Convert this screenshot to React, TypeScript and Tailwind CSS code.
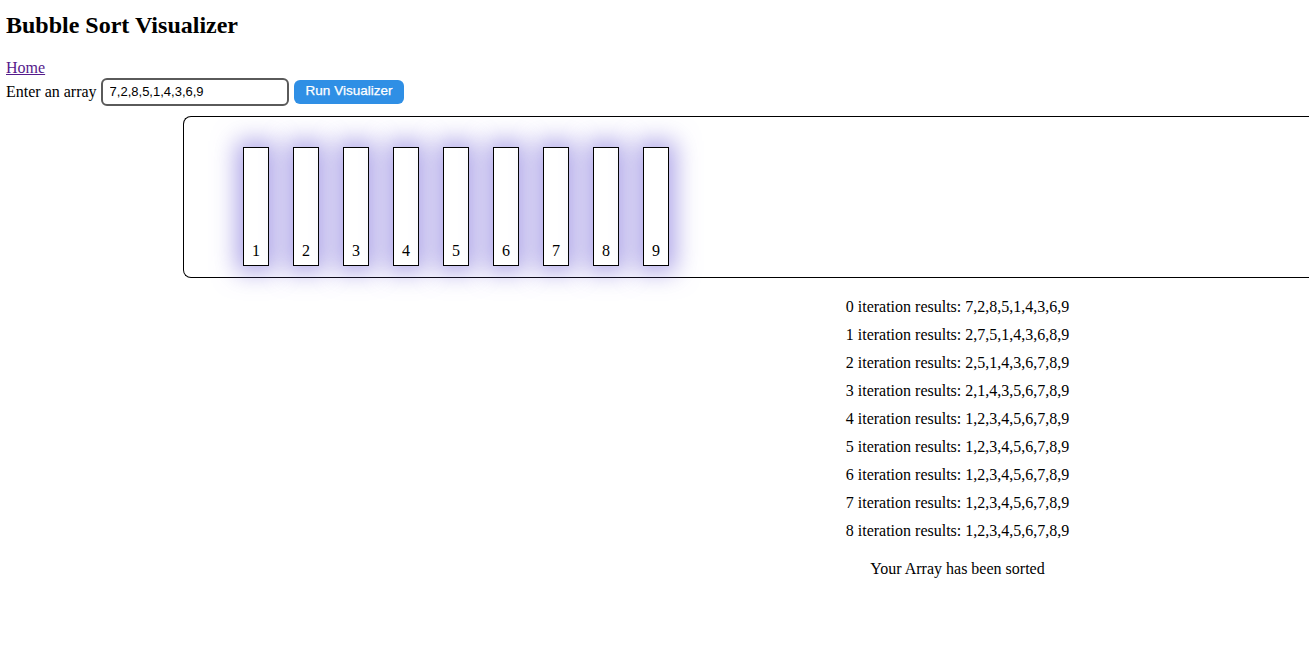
import React from 'react';

const bars = [1, 2, 3, 4, 5, 6, 7, 8, 9];

const iterations = [
  '7,2,8,5,1,4,3,6,9',
  '2,7,5,1,4,3,6,8,9',
  '2,5,1,4,3,6,7,8,9',
  '2,1,4,3,5,6,7,8,9',
  '1,2,3,4,5,6,7,8,9',
  '1,2,3,4,5,6,7,8,9',
  '1,2,3,4,5,6,7,8,9',
  '1,2,3,4,5,6,7,8,9',
  '1,2,3,4,5,6,7,8,9',
];

export default function App() {
  return (
    <div className="w-[1309px] h-[650px] overflow-hidden bg-white font-['Liberation_Serif',serif] text-[16px] text-black">
      <h2 className="pl-[6px] pt-[12px] text-[24px] font-bold leading-[27px]">Bubble Sort Visualizer</h2>

      <div className="px-[6px] mt-[20px]">
        <a href="#" className="text-[#551a8b] underline leading-[18px] block">Home</a>
        <div className="flex items-center h-[29px]">
          <span>Enter an array</span>
          <input
            defaultValue="7,2,8,5,1,4,3,6,9"
            className="ml-[4px] w-[188px] h-[28px] border-2 border-[#5a5a5a] rounded-[6px] px-[7px] font-['Liberation_Sans',sans-serif] text-[13px] outline-none"
          />
          <button className="ml-[5px] h-[24px] px-[12px] bg-[#2f8fe5] text-white rounded-[6px] font-['Liberation_Sans',sans-serif] text-[13.5px] [-webkit-text-stroke:0.25px_white]">
            Run Visualizer
          </button>
        </div>
      </div>

      <div className="ml-[183px] mt-[10px] w-[1126px] h-[162px] border border-r-0 border-black rounded-l-[8px] flex gap-[24px] pl-[59px] pt-[30px]">
        {bars.map((n) => (
          <div
            key={n}
            className="w-[26px] h-[119px] bg-white border border-black flex items-end justify-center pb-[4px] leading-[20px] shadow-[0_0_24px_6px_rgba(115,100,215,0.6)]"
          >
            {n}
          </div>
        ))}
      </div>

      <div className="mt-[15px] pl-[606px] text-center">
        {iterations.map((r, i) => (
          <div key={i} className="leading-[28px]">
            {i} iteration results: {r}
          </div>
        ))}
        <div className="leading-[28px] mt-[10px]">Your Array has been sorted</div>
      </div>
    </div>
  );
}
